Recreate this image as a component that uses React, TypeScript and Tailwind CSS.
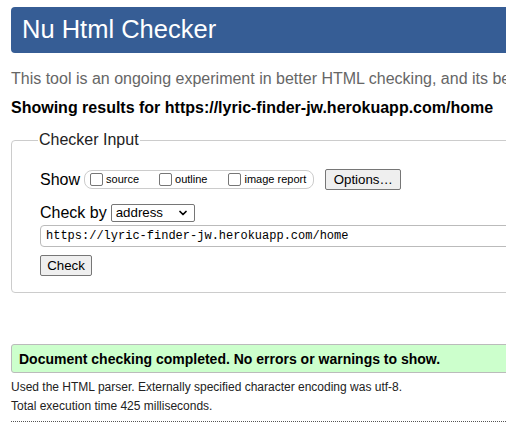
import { ChevronDown } from "lucide-react";

function Box({ label, gap }: { label: string; gap: string }) {
  return (
    <span className={`flex items-center ${gap}`}>
      <span className="h-[13px] w-[13px] rounded-[2px] border border-[#767676] bg-white" />
      <span className="ml-[3px] text-[11px] leading-none text-black">{label}</span>
    </span>
  );
}

export default function App() {
  return (
    <div className="h-[438px] w-[506px] overflow-hidden bg-white font-['Liberation_Sans',Arial,sans-serif] text-black">
      <div className="w-[640px] pl-[11px] pt-[7px]">
        <header className="flex h-[46px] items-center rounded-[4px] bg-[#365d95] pl-[11px]">
          <h1 className="text-[25.5px] leading-none text-white">Nu Html Checker</h1>
        </header>

        <p className="mt-[17px] whitespace-nowrap text-[16px] leading-[18px] text-[#666]">
          This tool is an ongoing experiment in better HTML checking, and its behavior remains subject to change
        </p>
        <p className="mt-[11px] whitespace-nowrap text-[16px] font-bold leading-[18px]">
          Showing results for https://lyric-finder-jw.herokuapp.com/home
        </p>

        <fieldset className="mt-[14px] rounded-[4px] border border-[#ccc] pb-[16px] pl-[26px]">
          <legend className="px-[1px] text-[16px] leading-[18px] text-[#222]">Checker Input</legend>
          <div className="pl-[2px] pt-[20px]">
            <div className="flex h-[21px] items-center">
              <span className="text-[16px] leading-none">Show</span>
              <div className="ml-[4px] flex h-[19px] items-center rounded-[8px] border border-[#ccc] pl-[5px] pr-[7px]">
                <Box label="source" gap="" />
                <Box label="outline" gap="ml-[20px]" />
                <Box label="image report" gap="ml-[21px]" />
              </div>
              <button className="ml-[11px] flex h-[21px] w-[76px] items-center justify-center rounded-[2px] border border-[#767676] bg-[#efefef] text-[13.3px] leading-none">
                Options…
              </button>
            </div>

            <div className="mt-[12px] flex h-[22px] items-center">
              <span className="text-[16px] leading-none">Check by</span>
              <div className="ml-[4px] flex h-[18px] w-[84px] items-center justify-between rounded-[2px] border border-[#767676] bg-white pl-[4px] pr-[5px]">
                <span className="text-[13.3px] leading-none">address</span>
                <ChevronDown className="h-[12px] w-[12px]" strokeWidth={3.5} />
              </div>
            </div>

            <div className="mt-[1px] flex h-[22px] w-[560px] items-center rounded-[4px] border border-[#bbb] bg-white pl-[5px]">
              <span className="font-['Liberation_Mono',monospace] text-[12px] leading-none text-black">
                https://lyric-finder-jw.herokuapp.com/home
              </span>
            </div>

            <button className="mt-[8px] flex h-[21px] w-[52px] items-center justify-center rounded-[2px] border border-[#767676] bg-[#efefef] text-[13.3px] leading-none">
              Check
            </button>
          </div>
        </fieldset>

        <div className="mt-[51px] flex h-[29px] items-center rounded-[3px] border border-[#bbb] bg-[#ccffcc] pl-[7px]">
          <span className="text-[14px] font-bold leading-none">
            Document checking completed. No errors or warnings to show.
          </span>
        </div>

        <p className="mt-[5px] text-[12px] leading-[19px] text-[#222]">
          Used the HTML parser. Externally specified character encoding was utf-8.
        </p>
        <p className="text-[12px] leading-[19px] text-[#222]">Total execution time 425 milliseconds.</p>
        <div className="mt-[5px] border-t border-dotted border-[#555]" />
      </div>
    </div>
  );
}
